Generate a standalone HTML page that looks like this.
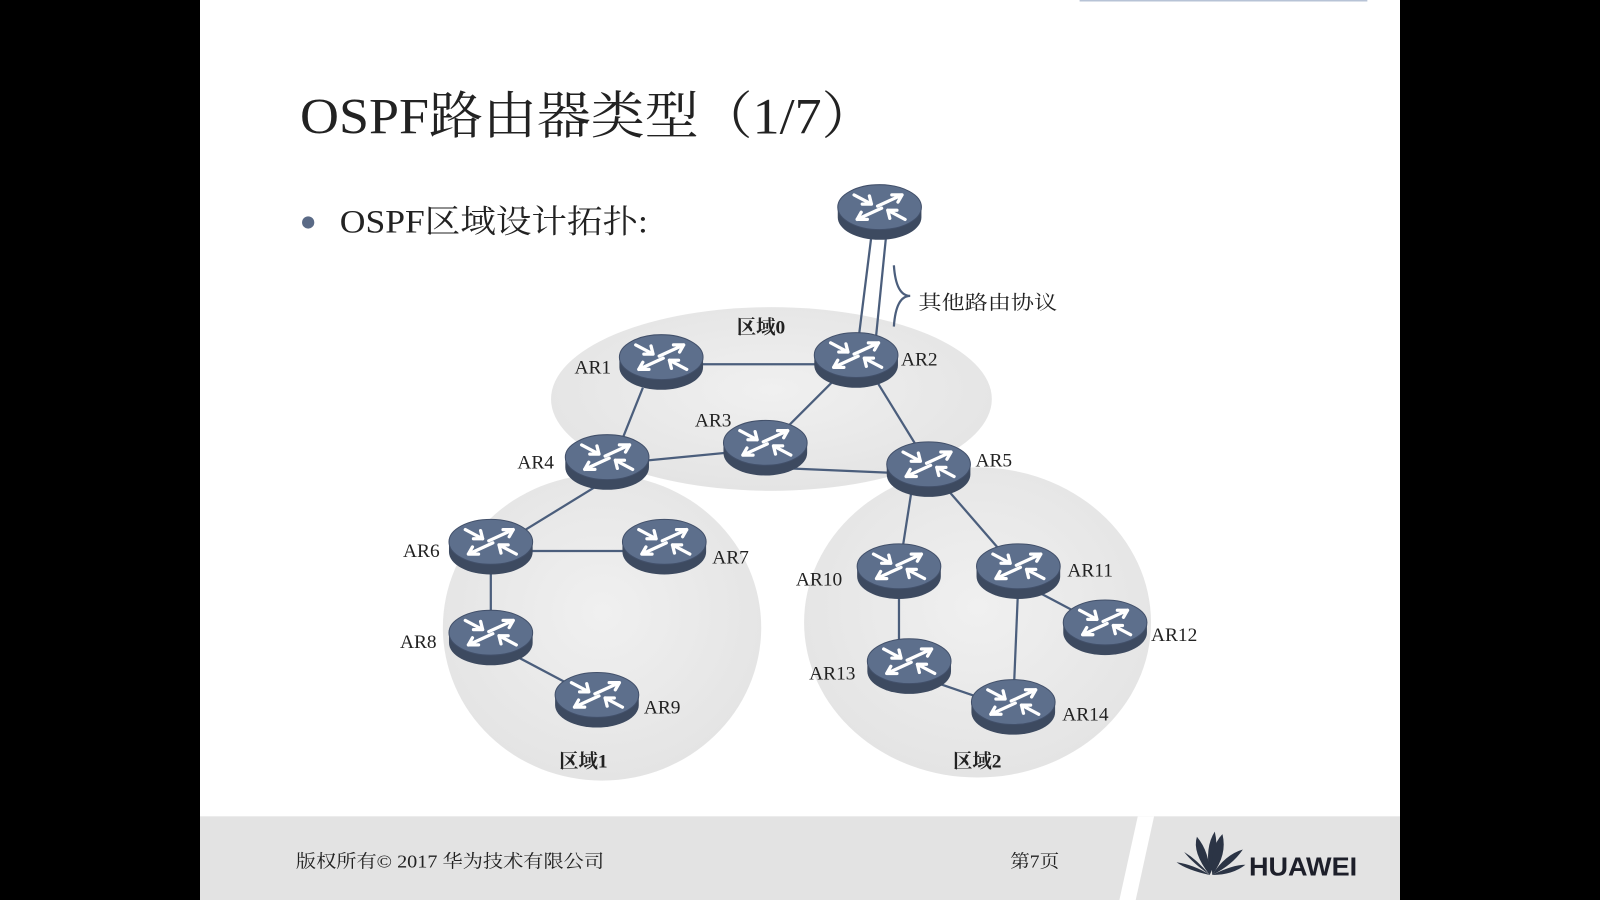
<!DOCTYPE html>
<html><head><meta charset="utf-8"><style>
html,body{margin:0;padding:0;background:#000;width:1600px;height:900px;overflow:hidden}
svg{display:block}
.t{font-family:"Liberation Serif","Noto Serif CJK SC",serif;fill:#222}
.l{font-family:"Liberation Serif","Noto Serif CJK SC",serif;font-size:19px;fill:#222}
.s{font-family:"Liberation Sans","Noto Sans CJK SC",sans-serif}
</style></head><body>
<svg width="1600" height="900" viewBox="0 0 1568 882" xmlns="http://www.w3.org/2000/svg">
<defs>
<radialGradient id="ga" cx="50%" cy="45%" r="60%"><stop offset="0" stop-color="#f0f0f0"/><stop offset="1" stop-color="#e3e3e3"/></radialGradient>
<g id="r">
<path d="M-41 0 v10 a41 22 0 0 0 82 0 v-10 z" fill="#3d4a60"/>
<ellipse cx="0" cy="0" rx="41" ry="22" fill="#5d6f8c" stroke="#42506a" stroke-width="1"/>
<g fill="none" stroke="#fff" stroke-width="3.2" stroke-linecap="round" stroke-linejoin="round">
<path d="M-2 -1 L22 -12 M22 -12 h-10 M22 -12 l-4 7"/>
<path d="M2 1 L-22 12 M-22 12 h10 M-22 12 l4 -7"/>
<path d="M-25 -12 L-8 -3 M-8 -3 h-9 M-8 -3 l-2 -8"/>
<path d="M25 12 L8 3 M8 3 h9 M8 3 l2 8"/>
</g>
</g>
</defs>
<rect x="196" y="0" width="1176" height="882" fill="#fff"/>
<line x1="1058" y1="0.5" x2="1340" y2="0.5" stroke="#b7c3d6" stroke-width="2"/>
<text class="t" x="294" y="131" font-size="50" textLength="564" lengthAdjust="spacingAndGlyphs">OSPF路由器类型（1/7）</text>
<circle cx="302" cy="218" r="6" fill="#5a6a86"/>
<text class="t" x="333" y="228" font-size="32" textLength="302" lengthAdjust="spacingAndGlyphs">OSPF区域设计拓扑:</text>
<ellipse cx="756" cy="391" rx="216" ry="90" fill="url(#ga)"/>
<ellipse cx="590" cy="615" rx="156" ry="150" fill="url(#ga)"/>
<ellipse cx="958" cy="610" rx="170" ry="152" fill="url(#ga)"/>
<g stroke="#4b5e7c" stroke-width="2.2" fill="none">
<line x1="856" y1="215" x2="841" y2="335"/><line x1="870" y1="215" x2="858" y2="335"/>
<path d="M876 260 q2 30 16 30 q-14 0 -16 30"/>
<line x1="648" y1="357" x2="839" y2="357"/>
<line x1="630" y1="380" x2="610" y2="430"/>
<line x1="595" y1="455" x2="750" y2="440"/>
<line x1="750" y1="440" x2="820" y2="370"/>
<line x1="750" y1="458" x2="910" y2="465"/>
<line x1="860" y1="375" x2="900" y2="440"/>
<line x1="595" y1="470" x2="481" y2="540"/>
<line x1="481" y1="540" x2="651" y2="540"/>
<line x1="481" y1="545" x2="481" y2="622"/>
<line x1="481" y1="630" x2="585" y2="685"/>
<line x1="895" y1="470" x2="881" y2="560"/>
<line x1="920" y1="470" x2="998" y2="560"/>
<line x1="881" y1="570" x2="881" y2="650"/>
<line x1="891" y1="660" x2="993" y2="695"/>
<line x1="998" y1="570" x2="993" y2="690"/>
<line x1="998" y1="570" x2="1083" y2="615"/>
</g>
<use href="#r" x="862" y="203"/>
<use href="#r" x="648" y="350"/>
<use href="#r" x="839" y="348"/>
<use href="#r" x="750" y="434"/>
<use href="#r" x="595" y="448"/>
<use href="#r" x="910" y="455"/>
<use href="#r" x="481" y="531"/>
<use href="#r" x="651" y="531"/>
<use href="#r" x="481" y="620"/>
<use href="#r" x="585" y="681"/>
<use href="#r" x="881" y="555"/>
<use href="#r" x="998" y="555"/>
<use href="#r" x="1083" y="610"/>
<use href="#r" x="891" y="648"/>
<use href="#r" x="993" y="688"/>
<text class="l" x="900" y="303" font-size="21" textLength="136" lengthAdjust="spacingAndGlyphs">其他路由协议</text>
<text class="l" x="722" y="327" font-weight="bold">区域0</text>
<text class="l" x="548" y="752" font-weight="bold">区域1</text>
<text class="l" x="934" y="752" font-weight="bold">区域2</text>
<text class="l" x="563" y="366">AR1</text>
<text class="l" x="883" y="358">AR2</text>
<text class="l" x="681" y="418">AR3</text>
<text class="l" x="507" y="459">AR4</text>
<text class="l" x="956" y="457">AR5</text>
<text class="l" x="395" y="546">AR6</text>
<text class="l" x="698" y="552">AR7</text>
<text class="l" x="392" y="635">AR8</text>
<text class="l" x="631" y="699">AR9</text>
<text class="l" x="780" y="574">AR10</text>
<text class="l" x="1046" y="565">AR11</text>
<text class="l" x="1128" y="628">AR12</text>
<text class="l" x="793" y="666">AR13</text>
<text class="l" x="1041" y="706">AR14</text>
<rect x="196" y="800" width="1176" height="82" fill="#e3e3e3"/>
<polygon points="1115,800 1131,800 1113,882 1097,882" fill="#fff"/>
<text class="t" x="290" y="850" font-size="18" textLength="302" lengthAdjust="spacingAndGlyphs">版权所有© 2017 华为技术有限公司</text>
<text class="t" x="990" y="850" font-size="18" textLength="48" lengthAdjust="spacingAndGlyphs">第7页</text>
<g fill="#2b3445" transform="translate(1188 860) scale(1.25) translate(-1188 -860)">
<path d="M1186 858 q-14 -10 -20 -18 q10 6 20 18z"/>
<path d="M1186 858 q-18 -4 -26 -10 q14 2 26 10z"/>
<path d="M1186 858 q-14 -18 -10 -30 q10 12 10 30z"/>
<path d="M1186 858 q-4 -22 4 -34 q4 18 -4 34z"/>
<path d="M1188 858 q-2 -22 8 -32 q4 16 -8 32z"/>
<path d="M1188 858 q10 -16 24 -20 q-8 12 -24 20z"/>
<path d="M1188 858 q16 -8 26 -8 q-10 8 -26 8z"/>
</g>
<text class="s" x="1224" y="858" font-size="25" font-weight="bold" fill="#1d1f2a" textLength="106" lengthAdjust="spacingAndGlyphs">HUAWEI</text>
</svg>
</body></html>
